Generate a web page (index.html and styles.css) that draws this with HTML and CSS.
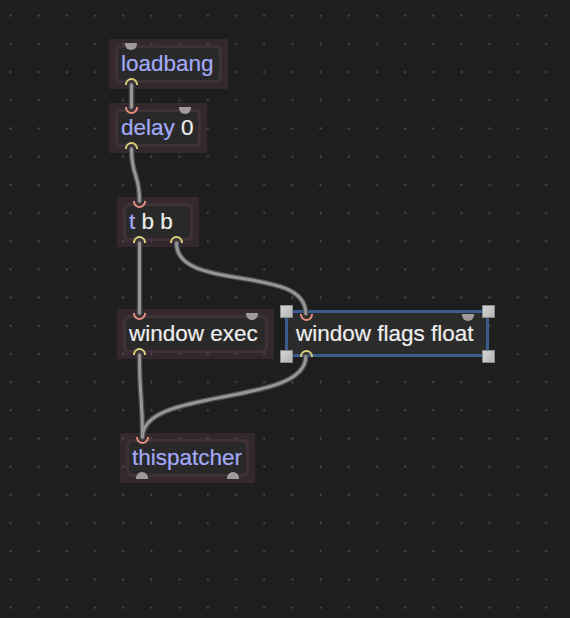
FILE: index.html
```html
<!DOCTYPE html>
<html lang="en">
<head>
    <meta charset="UTF-8">
    <title>Patcher</title>
    <link rel="stylesheet" href="styles.css">
</head>
<body>
    <div class="patcher">

        <div class="obj obj-loadbang">
            <div class="obj-band"><div class="obj-body"><span class="kw">loadbang</span></div></div>
            <span class="port inlet-free port-left"></span>
            <span class="port outlet-wired port-left"></span>
        </div>

        <div class="obj obj-delay">
            <div class="obj-band"><div class="obj-body"><span class="kw">delay</span> 0</div></div>
            <span class="port inlet-wired port-left"></span>
            <span class="port inlet-free port-right"></span>
            <span class="port outlet-wired port-left"></span>
        </div>

        <div class="obj obj-trigger">
            <div class="obj-band"><div class="obj-body"><span class="kw">t</span> b b</div></div>
            <span class="port inlet-wired port-left"></span>
            <span class="port outlet-wired port-left"></span>
            <span class="port outlet-wired port-right"></span>
        </div>

        <div class="obj obj-exec">
            <div class="obj-band"><div class="obj-body">window exec</div></div>
            <span class="port inlet-wired port-left"></span>
            <span class="port inlet-free port-right"></span>
            <span class="port outlet-wired port-left"></span>
        </div>

        <div class="obj-selected">
            window flags float
            <span class="port inlet-wired port-left"></span>
            <span class="port inlet-free port-right"></span>
            <span class="port outlet-wired port-left"></span>
            <span class="handle h-tl"></span>
            <span class="handle h-tr"></span>
            <span class="handle h-bl"></span>
            <span class="handle h-br"></span>
        </div>

        <div class="obj obj-thispatcher">
            <div class="obj-band"><div class="obj-body"><span class="kw">thispatcher</span></div></div>
            <span class="port inlet-wired port-left"></span>
            <span class="port outlet-free port-left"></span>
            <span class="port outlet-free port-right"></span>
        </div>

        <!-- patch cords, outlet centre to inlet centre -->
        <svg class="cables" width="570" height="618" viewBox="0 0 570 618">
            <g class="cable-edge">
                <path d="M131.5 85 L131.5 107"/>
                <path d="M131.5 149 C131.5 178 139.5 172 139.5 201"/>
                <path d="M139.5 243 L139.5 313"/>
                <path d="M176.5 243 C176.5 293 305.8 263.5 305.8 313.5"/>
                <path d="M139.5 355 C139.5 400 142.5 395 142.5 437"/>
                <path d="M305.8 356.5 C305.8 406.5 142.5 387 142.5 437"/>
            </g>
            <g class="cable-core">
                <path d="M131.5 85 L131.5 107"/>
                <path d="M131.5 149 C131.5 178 139.5 172 139.5 201"/>
                <path d="M139.5 243 L139.5 313"/>
                <path d="M176.5 243 C176.5 293 305.8 263.5 305.8 313.5"/>
                <path d="M139.5 355 C139.5 400 142.5 395 142.5 437"/>
                <path d="M305.8 356.5 C305.8 406.5 142.5 387 142.5 437"/>
            </g>
        </svg>
    </div>
</body>
</html>
```

FILE: styles.css
```css
body {
    margin: 0;
    padding: 0;
    background-color: #1e1e1e;
    font-family: "Liberation Sans", Arial, sans-serif;
}
.patcher {
    position: relative;
    width: 570px;
    height: 618px;
    overflow: hidden;
    background-color: #1e1e1e;
    background-image: radial-gradient(circle, #474747 0, #474747 0.9px, transparent 1.4px);
    background-size: 28.2px 28.2px;
    background-position: -3.6px 1.6px;
}

/* object boxes */
.obj {
    position: absolute;
    box-sizing: border-box;
    height: 50px;
    padding: 6px;
    background: rgba(120, 70, 98, 0.25);
}
.obj-band {
    padding: 3px;
    background: #3e3138;
    border-radius: 6px;
}
.obj-body {
    height: 32px;
    line-height: 32px;
    padding-left: 3px;
    background: #292929;
    border-radius: 4px;
    font-size: 22.5px;
    color: #eeeeee;
    white-space: nowrap;
    -webkit-text-stroke: 0.2px currentColor;
}
.kw {
    color: #a3aaf7;
}
.obj-loadbang { left: 109px; top: 39px; width: 119px; }
.obj-delay { left: 109px; top: 103px; width: 98px; }
.obj-trigger { left: 117px; top: 197px; width: 82px; }
.obj-exec { left: 117px; top: 309px; width: 157px; }
.obj-thispatcher { left: 120px; top: 433px; width: 135px; }

.obj-selected {
    position: absolute;
    left: 285px;
    top: 310px;
    width: 204px;
    height: 47px;
    box-sizing: border-box;
    padding-left: 8px;
    border: 3px solid #3a5b8e;
    background: #2b2b2b;
    font-size: 22.5px;
    line-height: 42px;
    color: #eeeeee;
    white-space: nowrap;
    -webkit-text-stroke: 0.2px currentColor;
}

/* inlets and outlets */
.port {
    position: absolute;
    box-sizing: border-box;
    width: 13px;
    height: 7px;
}
.port-left { left: 16px; }
.port-right { right: 16px; }
.inlet-wired {
    top: 4px;
    border: 2px solid #e3917f;
    border-top: 0;
    border-radius: 0 0 7px 7px;
}
.outlet-wired {
    bottom: 4px;
    border: 2px solid #d9d27b;
    border-bottom: 0;
    border-radius: 7px 7px 0 0;
}
.inlet-free {
    top: 4px;
    width: 12px;
    background: #a09a9c;
    border-radius: 0 0 6px 6px;
}
.outlet-free {
    bottom: 4px;
    width: 12px;
    background: #a09a9c;
    border-radius: 6px 6px 0 0;
}
.obj-selected .port-left { left: 11.5px; }
.obj-selected .port-right { right: 12.5px; }
.obj-selected .inlet-wired,
.obj-selected .inlet-free { top: 0.5px; }
.obj-selected .outlet-wired { bottom: -2.5px; }

/* selection handles */
.handle {
    position: absolute;
    width: 13px;
    height: 13px;
    box-sizing: border-box;
    border: 1px solid #8a8a8a;
    background: linear-gradient(135deg, #d6d6d6, #b4b4b4);
}
.h-tl { left: -8.5px; top: -8.5px; }
.h-tr { right: -8.5px; top: -8.5px; }
.h-bl { left: -8.5px; bottom: -8.5px; }
.h-br { right: -8.5px; bottom: -8.5px; }

/* patch cords */
.cables {
    position: absolute;
    left: 0;
    top: 0;
    pointer-events: none;
}
.cables path {
    fill: none;
    stroke-linecap: round;
}
.cable-edge path {
    stroke: #4c4c4c;
    stroke-width: 5.5;
}
.cable-core path {
    stroke: #969696;
    stroke-width: 3;
}
```
